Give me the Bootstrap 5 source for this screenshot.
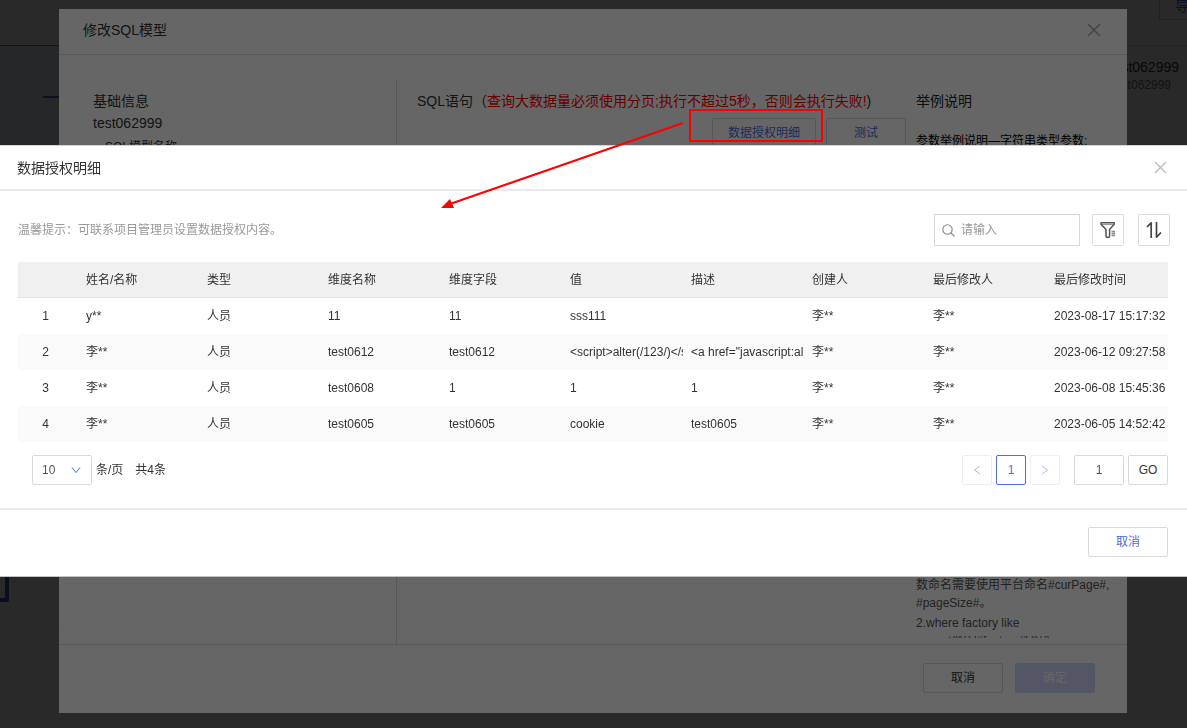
<!DOCTYPE html>
<html lang="zh-CN">
<head>
<meta charset="utf-8">
<meta name="viewport" content="width=device-width, initial-scale=1">
<title>数据授权明细</title>
<link href="https://cdn.jsdelivr.net/npm/bootstrap@5.3.0/dist/css/bootstrap.min.css" rel="stylesheet">
<style>
  body { font-family: "Liberation Sans", "Noto Sans CJK SC", sans-serif; font-size: 12px; line-height: 18px; color: #333; background: #fff; height: 100vh; overflow: hidden; }
  .title-text { font-size: 14px; line-height: 22px; font-weight: 400; margin: 0; }
  .veil { background: rgba(0,0,0,.6); }

  /* page behind the dialogs */
  .page-bar { height: 45px; }
  .page-main { grid-template-columns: 59px 1fr 60px; border-top: 1px solid #ddd; }
  .page-side { background: #eaf3fc; height: 400px; border-top: 1px solid #6080c8; margin-top: -1px; }
  .side-line { height: 2px; width: 16px; margin-top: 50px; background: #4868c8; }
  .side-foot { height: 184px; border-bottom: 1px solid #e8e8e8; }
  .side-node { width: 9px; height: 157px; border: 4px solid #3060b0; border-left: 0; border-radius: 0 3px 3px 0; }
  .side-rule { width: 1px; margin-left: 28px; background: #eee; }
  .page-name { font-size: 14px; }
  .btn-export { width: 60px; height: 20px; margin-right: -32px; border: 1px solid #ccc; border-top: 0; color: #4060d8; background: #fff; padding: 0 0 8px 15px; font-size: 14px; line-height: 10px; text-align: left; border-radius: 0; }

  /* SQL model dialog */
  .sheet-model { top: 9px; bottom: 15px; left: 59px; right: 60px; background: #fff; }
  .model-head { height: 46px; padding: 0 24px 4px; border-bottom: 1px solid #ddd; }
  .model-body { display: grid; grid-template-columns: 338fr 519fr 211fr; padding-top: 24px; min-height: 0; }
  .model-body > div { padding-top: 11px; min-width: 0; }
  .pane-base { padding-left: 34px; border-right: 1px solid #ddd; }
  .pane-sql { padding: 0 10px 0 20px; }
  .sql-actions { margin-top: 6px; gap: 10px; }
  .pane-help { margin-bottom: 6px; overflow: hidden; color: #555; }
  .help-tail { margin: auto 0 -12px; }
  .help-next { padding-top: 2px; }
  .model-foot { padding: 18px 32px 20px; border-top: 1px solid #ddd; }
  .warn-text { color: #f00; }

  .btn-ui { --bs-btn-font-size: 12px; --bs-btn-line-height: 18px; --bs-btn-padding-x: 0; --bs-btn-padding-y: 5px; --bs-btn-border-radius: 2px; --bs-btn-border-color: #d9d9d9; --bs-btn-color: #333; --bs-btn-bg: #fff; height: 30px; min-width: 80px; }
  .btn-blue { --bs-btn-color: #4a6de0; }
  .btn-wide { width: 104px; }
  .btn-ok:disabled { background: #d0d8fc; border-color: #d0d8fc; color: #fff; opacity: 1; }
  .btn-x { background: none; border: 0; padding: 0; display: flex; color: #aaa; }

  /* authorisation details dialog */
  .sheet-auth { top: 145px; left: 0; right: 0; background: #fff; border-top: 1px solid #d4d4d4; border-bottom: 1px solid #c4c4c4; }
  .auth-head { height: 45px; padding: 0 20px 0 17px; border-bottom: 2px solid #ebebeb; }
  .auth-body { padding: 23px 19px 23px 18px; }
  .auth-tip { color: #999; }
  .auth-tools { gap: 12px; margin-right: -2px; }
  .search-box { width: 146px; height: 32px; border: 1px solid #d9d9d9; padding: 0 7px; gap: 6px; }
  .search-box input { border: 0; outline: 0; padding: 0; min-width: 0; width: 100%; }
  .search-box input::placeholder { color: #999; }
  .btn-icon { --bs-btn-padding-x: 0; --bs-btn-padding-y: 0; --bs-btn-border-color: #dcdcdc; --bs-btn-border-radius: 1px; width: 32px; height: 32px; display: flex; align-items: center; justify-content: center; }
  .icon-pair { gap: 14px; }

  .auth-table { table-layout: fixed; margin: 16px 0 13px; }
  .auth-table > :not(caption) > * > * { height: 36px; padding: 0 4px; border: 0; white-space: nowrap; overflow: hidden; vertical-align: middle; color: #333; font-weight: 400; line-height: 18px; }
  .auth-table > thead > tr > th { background: #f0f0f0; box-shadow: inset 0 -1px #e2e2e2; }
  .auth-table > tbody > .row-alt > td { background: #fafafa; }
  .auth-table .col-no { width: 64px; }
  .auth-table .col-time { width: 118px; }
  .auth-table > tbody > tr > td:first-child { text-align: center; padding-right: 13px; }

  .page-size { gap: 4px; margin-left: 14px; }
  .page-select { width: 60px; height: 30px; border: 1px solid #d9d9d9; border-radius: 2px; padding: 0 9px; color: #555; appearance: none; background: #fff url("data:image/svg+xml,%3Csvg xmlns='http://www.w3.org/2000/svg' width='10' height='8'%3E%3Cpath d='M1 1.5l4 5 4-5' fill='none' stroke='%234a6de0'/%3E%3C/svg%3E") no-repeat right 10px center; }
  .pager { gap: 4px; margin: 0 14px 0 0; }
  .pager .page-item .page-link { width: 30px; height: 30px; padding: 0; display: flex; align-items: center; justify-content: center; font-size: 12px; color: #a9b9f0; border-color: #eee; border-radius: 2px; margin: 0; }
  .pager .active .page-link { background: #fff; border-color: #4a6de0; color: #4a6de0; }
  .page-input { width: 50px; height: 30px; border: 1px solid #d9d9d9; border-radius: 2px; text-align: center; color: #555; }
  .btn-go { min-width: 40px; }
  .auth-foot { padding: 17px 19px 19px; border-top: 2px solid #ebebeb; }

  .callout-layer { top: 0; left: 0; pointer-events: none; }
</style>
</head>
<body>
<div class="position-absolute top-0 start-0 w-100 h-100 overflow-hidden">
  <div class="page-bar d-flex justify-content-end overflow-hidden"><button class="btn-export" type="button">导出</button></div>
  <div class="page-main d-grid">
    <div>
      <div class="page-side d-flex justify-content-end"><div class="side-line"></div></div>
      <div class="side-foot d-flex"><div class="side-node"></div><div class="side-rule"></div></div>
    </div>
    <div></div>
    <div class="pt-2">
      <div class="page-name d-flex justify-content-end pe-2 pt-1">test062999</div>
      <div class="d-flex justify-content-end pe-3 text-secondary">test062999</div>
    </div>
  </div>
</div>
<div class="veil position-fixed top-0 start-0 w-100 h-100"></div>

<section class="sheet-model position-fixed d-flex flex-column" role="dialog" aria-label="修改SQL模型">
  <header class="model-head d-flex align-items-center justify-content-between">
    <h1 class="title-text">修改SQL模型</h1>
    <button class="btn-x" type="button" aria-label="关闭"><svg width="18" height="18" viewBox="0 0 18 18" fill="none" stroke="currentColor" stroke-width="1.5"><path d="M3 3l12 12M15 3L3 15"/></svg></button>
  </header>
  <div class="model-body flex-grow-1">
    <div class="pane-base">
      <h2 class="title-text">基础信息</h2>
      <div class="title-text">test062999</div>
      <div class="ps-2 pt-1 ms-1">SQL模型名称</div>
    </div>
    <div class="pane-sql">
      <h2 class="title-text text-nowrap">SQL语句（<span class="warn-text">查询大数据量必须使用分页;执行不超过5秒，否则会执行失败!</span>)</h2>
      <div class="sql-actions d-flex justify-content-end">
        <button class="btn btn-ui btn-blue btn-wide" type="button">数据授权明细</button>
        <button class="btn btn-ui btn-blue" type="button">测试</button>
      </div>
    </div>
    <div class="pane-help d-flex flex-column text-nowrap">
      <h2 class="title-text text-dark">举例说明</h2>
      <div class="mt-3 pt-1 text-black">参数举例说明—字符串类型参数:</div>
      <div class="help-tail">数命名需要使用平台命名#curPage#,<br>#pageSize#。<div class="help-next">2.where factory like<br>concat('%','#factory#','%')</div></div>
    </div>
  </div>
  <footer class="model-foot d-flex justify-content-end gap-2">
    <button class="btn btn-ui me-1" type="button">取消</button>
    <button class="btn btn-ui btn-ok" type="button" disabled>确定</button>
  </footer>
</section>
<div class="veil position-fixed top-0 start-0 w-100 h-100"></div>

<section class="sheet-auth position-fixed" role="dialog" aria-label="数据授权明细">
  <header class="auth-head d-flex align-items-center justify-content-between">
    <h1 class="title-text">数据授权明细</h1>
    <button class="btn-x" type="button" aria-label="关闭"><svg width="13" height="13" viewBox="0 0 13 13" fill="none" stroke="#bbb" stroke-width="1.2"><path d="M1 1l11 11M12 1L1 12"/></svg></button>
  </header>
  <div class="auth-body">
    <div class="auth-tools d-flex align-items-center">
      <span class="auth-tip me-auto">温馨提示：可联系项目管理员设置数据授权内容。</span>
      <label class="search-box d-flex align-items-center">
        <svg class="flex-shrink-0" width="13" height="13" viewBox="0 0 13 13" fill="none" stroke="#888" stroke-width="1.1"><circle cx="5.500" cy="5.500" r="4.7"/><path d="M9 9l3.500 3.500"/></svg>
        <input type="text" placeholder="请输入" aria-label="请输入">
      </label>
      <div class="icon-pair d-flex">
        <button class="btn btn-icon" type="button" aria-label="筛选"><svg width="18" height="18" viewBox="0 0 18 18" fill="none" stroke="#555" stroke-width="1.5"><path d="M2 1.800h13.200v1.500L10.600 8.500v6.500c0 2-3.600 2-3.600 0V8.500L2 3.300z" stroke-linejoin="round"/><path d="M3 3.500h11" stroke-width=".6"/><path d="M12.500 10.500h3.500M12.500 12.500h3.500M12.500 14.500h3.500" stroke="#888" stroke-width="1.400"/></svg></button>
        <button class="btn btn-icon" type="button" aria-label="排序"><svg width="18" height="18" viewBox="0 0 18 18" fill="none" stroke="#444" stroke-width="1.700" stroke-linejoin="round"><path d="M2 6L6.200 1.800V17M11.500 1v15.200L16 11.500"/></svg></button>
      </div>
    </div>
    <table class="table table-borderless auth-table">
      <thead><tr><th class="col-no"></th><th>姓名/名称</th><th>类型</th><th>维度名称</th><th>维度字段</th><th>值</th><th>描述</th><th>创建人</th><th>最后修改人</th><th class="col-time">最后修改时间</th></tr></thead>
      <tbody>
        <tr><td>1</td><td>y**</td><td>人员</td><td>11</td><td>11</td><td>sss111</td><td></td><td>李**</td><td>李**</td><td>2023-08-17 15:17:32</td></tr>
        <tr class="row-alt"><td>2</td><td>李**</td><td>人员</td><td>test0612</td><td>test0612</td><td><div class="overflow-hidden">&lt;script&gt;alter(/123/)&lt;/s</div></td><td><div class="overflow-hidden">&lt;a href="javascript:al</div></td><td>李**</td><td>李**</td><td>2023-06-12 09:27:58</td></tr>
        <tr><td>3</td><td>李**</td><td>人员</td><td>test0608</td><td>1</td><td>1</td><td>1</td><td>李**</td><td>李**</td><td>2023-06-08 15:45:36</td></tr>
        <tr class="row-alt"><td>4</td><td>李**</td><td>人员</td><td>test0605</td><td>test0605</td><td>cookie</td><td>test0605</td><td>李**</td><td>李**</td><td>2023-06-05 14:52:42</td></tr>
      </tbody>
    </table>
    <div class="d-flex align-items-center">
      <div class="page-size d-flex align-items-center me-auto">
        <select class="page-select" id="size"><option>10</option></select>
        <label for="size">条/页</label>
        <span class="ms-2">共4条</span>
      </div>
      <ul class="pagination pager">
        <li class="page-item"><a class="page-link" href="#" aria-label="上一页"><svg width="8" height="10" viewBox="0 0 8 10" fill="none" stroke="currentColor"><path d="M7 1L1.500 5 7 9"/></svg></a></li>
        <li class="page-item active"><a class="page-link" href="#">1</a></li>
        <li class="page-item"><a class="page-link" href="#" aria-label="下一页"><svg width="8" height="10" viewBox="0 0 8 10" fill="none" stroke="currentColor"><path d="M1 1l5.500 4L1 9"/></svg></a></li>
      </ul>
      <input class="page-input me-1" type="text" value="1" aria-label="页码">
      <button class="btn btn-ui btn-go" type="button">GO</button>
    </div>
  </div>
  <footer class="auth-foot d-flex justify-content-end"><button class="btn btn-ui btn-blue" type="button">取消</button></footer>
</section>

<!-- callout from the button to the dialog that it opens -->
<svg class="callout-layer position-fixed" width="840" height="220" fill="none" stroke="#f00" stroke-width="2" aria-hidden="true">
  <rect x="690" y="110" width="132" height="31"/>
  <path d="M683 123L450 204"/>
  <path d="M441 208l9-9 4 9z" fill="#f00" stroke="none"/>
</svg>
<script src="https://cdn.jsdelivr.net/npm/bootstrap@5.3.0/dist/js/bootstrap.bundle.min.js"></script>
</body>
</html>
